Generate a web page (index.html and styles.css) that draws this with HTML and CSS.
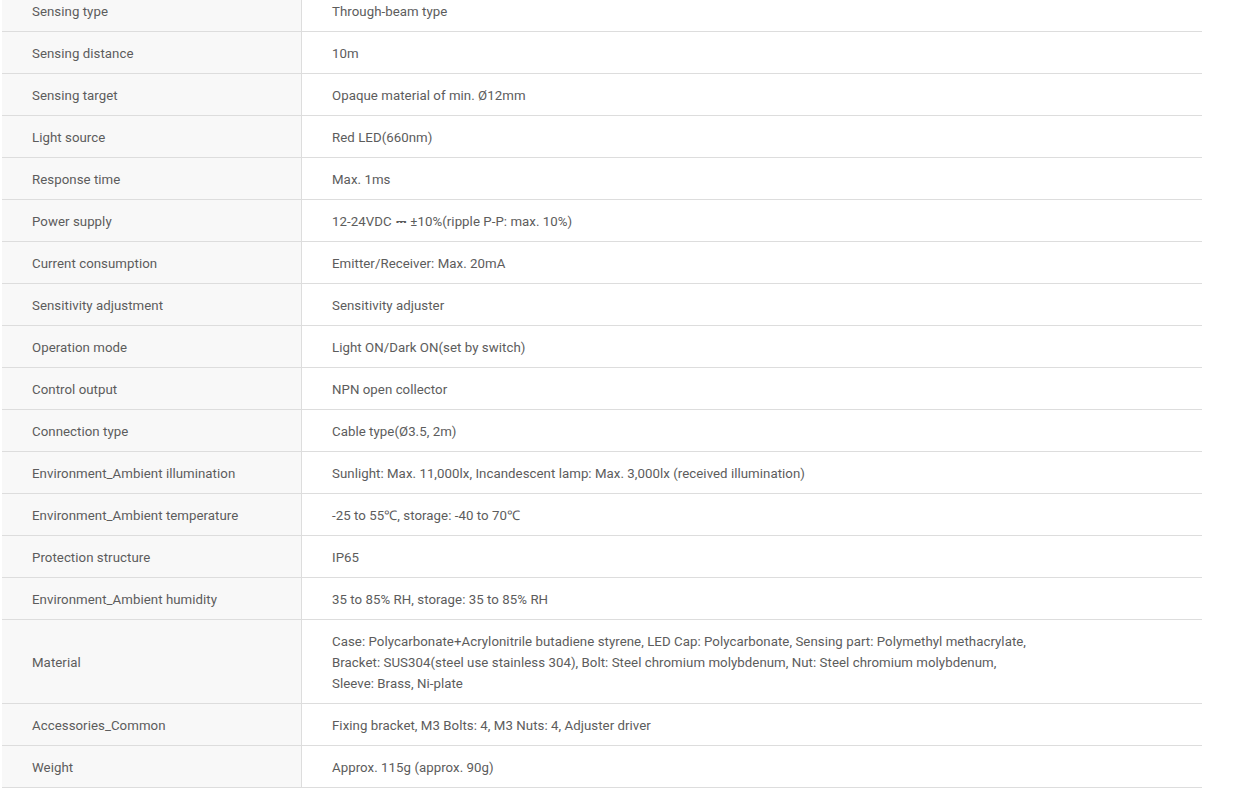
FILE: index.html
```html
<!DOCTYPE html>
<html lang="en">
<head>
<meta charset="utf-8">
<title>Specifications</title>
<link rel="stylesheet" href="styles.css">
</head>
<body>
<div class="wrap">
<table class="spec">
<tbody>
<tr><th>Sensing type</th><td>Through-beam type</td></tr>
<tr><th>Sensing distance</th><td>10m</td></tr>
<tr><th>Sensing target</th><td>Opaque material of min. Ø12mm</td></tr>
<tr><th>Light source</th><td>Red LED(660nm)</td></tr>
<tr><th>Response time</th><td>Max. 1ms</td></tr>
<tr><th>Power supply</th><td>12-24VDC <span class="dc">⎓</span> ±10%(ripple P-P: max. 10%)</td></tr>
<tr><th>Current consumption</th><td>Emitter/Receiver: Max. 20mA</td></tr>
<tr><th>Sensitivity adjustment</th><td>Sensitivity adjuster</td></tr>
<tr><th>Operation mode</th><td>Light ON/Dark ON(set by switch)</td></tr>
<tr><th>Control output</th><td>NPN open collector</td></tr>
<tr><th>Connection type</th><td>Cable type(Ø3.5, 2m)</td></tr>
<tr><th>Environment_Ambient illumination</th><td>Sunlight: Max. 11,000lx, Incandescent lamp: Max. 3,000lx (received illumination)</td></tr>
<tr><th>Environment_Ambient temperature</th><td>-25 to 55℃, storage: -40 to 70℃</td></tr>
<tr><th>Protection structure</th><td>IP65</td></tr>
<tr><th>Environment_Ambient humidity</th><td>35 to 85% RH, storage: 35 to 85% RH</td></tr>
<tr><th>Material</th><td>Case: Polycarbonate+Acrylonitrile butadiene styrene, LED Cap: Polycarbonate, Sensing part: Polymethyl methacrylate,<br>Bracket: SUS304(steel use stainless 304), Bolt: Steel chromium molybdenum, Nut: Steel chromium molybdenum,<br>Sleeve: Brass, Ni-plate</td></tr>
<tr><th>Accessories_Common</th><td>Fixing bracket, M3 Bolts: 4, M3 Nuts: 4, Adjuster driver</td></tr>
<tr><th>Weight</th><td>Approx. 115g (approx. 90g)</td></tr>
</tbody>
</table>
</div>
</body>
</html>
```
FILE: styles.css
```css
html, body {
  margin: 0;
  padding: 0;
  background: #fff;
}
.wrap {
  padding-left: 2px;
  margin-top: -10px;
}
.spec {
  width: 1200px;
  border-collapse: collapse;
  font-family: Roboto, "Liberation Sans", sans-serif;
  font-size: 13.25px;
  letter-spacing: 0.05px;
  line-height: 21px;
  color: #5c5c5c;
  table-layout: fixed;
}
.spec th,
.spec td {
  height: 21px;
  padding: 11px 10px 9px 30px;
  border-bottom: 1px solid #ddd;
  text-align: left;
  font-weight: normal;
  vertical-align: middle;
}
.spec th {
  width: 259px;
  background: #f8f8f8;
  border-right: 1px solid #ddd;
}
.dc {
  font-family: "DejaVu Sans", sans-serif;
  font-size: 13px;
  line-height: 1;
  vertical-align: 0;
  margin: 0 1px;
}
```
